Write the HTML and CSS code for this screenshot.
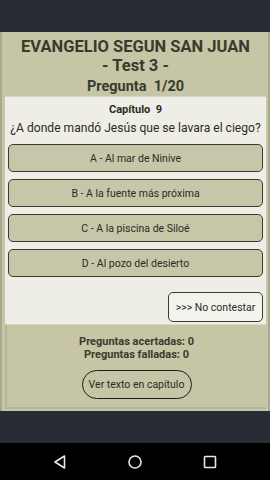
FILE: index.html
```html
<!DOCTYPE html>
<html lang="es">
<head>
    <meta charset="UTF-8">
    <title>Evangelio segun San Juan - Test 3</title>
    <link rel="stylesheet" href="styles.css">
</head>
<body>
<div class="status-bar"></div>

<div class="screen">
    <div class="header">
        <h1>EVANGELIO SEGUN SAN JUAN</h1>
        <h2>- Test 3 -</h2>
        <h3>Pregunta&nbsp; 1/20</h3>
    </div>

    <div class="question-panel">
        <div class="chapter">Capítulo&nbsp; 9</div>
        <div class="question">¿A donde mandó Jesús que se lavara el ciego?</div>

        <div class="answers">
            <button class="answer">A - Al mar de Ninive</button>
            <button class="answer">B - A la fuente más próxima</button>
            <button class="answer">C - A la piscina de Siloé</button>
            <button class="answer">D - Al pozo del desierto</button>
        </div>

        <div class="skip-row">
            <button class="skip">&gt;&gt;&gt; No contestar</button>
        </div>
    </div>

    <div class="score-panel">
        <div class="score">Preguntas acertadas: 0</div>
        <div class="score">Preguntas falladas: 0</div>
        <button class="pill">Ver texto en capítulo</button>
    </div>
</div>

<div class="filler"></div>

<div class="nav-bar">
    <svg width="16" height="16" viewBox="0 0 16 16">
        <path d="M12.5 2 L3 8 L12.5 14 Z" fill="none" stroke="#e8e8e8" stroke-width="1.6" stroke-linejoin="round"/>
    </svg>
    <svg width="16" height="16" viewBox="0 0 16 16">
        <circle cx="8" cy="8" r="6" fill="none" stroke="#e8e8e8" stroke-width="1.6"/>
    </svg>
    <svg width="16" height="16" viewBox="0 0 16 16">
        <rect x="2.5" y="2.5" width="11" height="11" rx="0.8" fill="none" stroke="#e8e8e8" stroke-width="1.6"/>
    </svg>
</div>
</body>
</html>
```

FILE: styles.css
```css
html, body {
    margin: 0;
    padding: 0;
    height: 100%;
}
body {
    background: #272c35;
    font-family: Roboto, "Liberation Sans", sans-serif;
    color: #2b2b22;
    display: flex;
    flex-direction: column;
}

.status-bar {
    height: 32px;
    flex: none;
}

.screen {
    background: #c6c5a6;
    border-left: 2px solid #a9a890;
    border-right: 2px solid #a9a890;
    padding: 0 2px 2px 3px;
    display: flex;
    flex-direction: column;
}

.header {
    text-align: center;
    color: #393a2c;
    padding-top: 5px;
    height: 59px;
}
.header h1 {
    margin: 0;
    font-size: 16.5px;
    line-height: 19px;
    font-weight: bold;
}
.header h2 {
    margin: 0;
    font-size: 16.5px;
    line-height: 20px;
    font-weight: bold;
}
.header h3 {
    margin: 0;
    font-size: 14.5px;
    line-height: 21px;
    font-weight: bold;
}

.question-panel {
    background: #efeee6;
    border-top: 1px solid #d4d3c4;
    padding: 6px 3px 2px 3px;
}
.chapter {
    text-align: center;
    font-weight: bold;
    font-size: 11px;
    line-height: 14px;
}
.question {
    text-align: center;
    font-size: 12.1px;
    line-height: 18px;
    margin: 2px -3px 0 -3px;
    white-space: nowrap;
}

.answers {
    display: flex;
    flex-direction: column;
    gap: 7px;
    margin-top: 7px;
}
.answer {
    height: 28px;
    background: #c8c6a8;
    border: 1px solid #3b3b30;
    border-radius: 5px;
    font-family: Roboto, "Liberation Sans", sans-serif;
    font-size: 10.5px;
    color: #2b2b22;
    padding: 0;
}

.skip-row {
    display: flex;
    justify-content: flex-end;
    margin-top: 15px;
}
.skip {
    width: 95px;
    height: 30px;
    background: #f3f3ee;
    border: 1px solid #3b3b30;
    border-radius: 5px;
    font-family: Roboto, "Liberation Sans", sans-serif;
    font-size: 10.5px;
    color: #2b2b22;
    padding: 0;
}

.score-panel {
    background: #c6c5a6;
    border-left: 2px solid #b5b49c;
    border-bottom: 2px solid #b5b49c;
    border-top: 1px solid #d8d7c8;
    text-align: center;
    padding: 10px 0 8px 0;
    display: flex;
    flex-direction: column;
    align-items: center;
}
.score {
    font-weight: bold;
    font-size: 11px;
    line-height: 13px;
    color: #3a3a2c;
}
.pill {
    margin-top: 9px;
    width: 110px;
    height: 29px;
    background: transparent;
    border: 1.5px solid #1e1e18;
    border-radius: 15px;
    font-family: Roboto, "Liberation Sans", sans-serif;
    font-size: 10.5px;
    color: #2b2b22;
    padding: 0;
}

.filler {
    flex: 1;
}

.nav-bar {
    height: 37px;
    flex: none;
    background: #000;
    display: flex;
    justify-content: space-between;
    align-items: center;
    padding: 0 52px;
}
```
